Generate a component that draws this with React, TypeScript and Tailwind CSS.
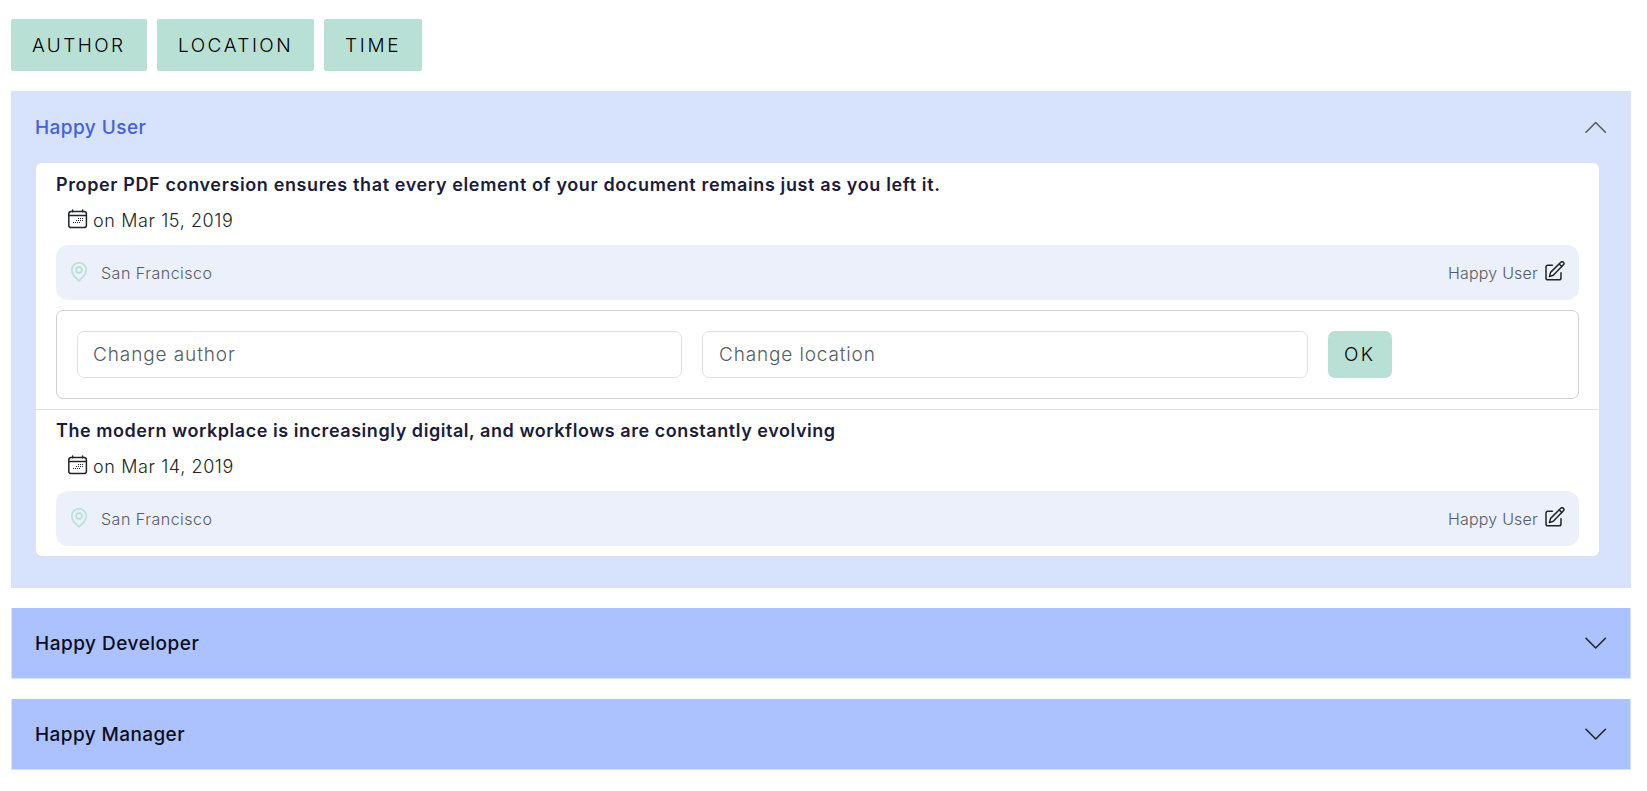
const filters = [
  { label: "AUTHOR", box: "w-[136px]", text: "tracking-[2.4px]" },
  { label: "LOCATION", box: "w-[157px]", text: "tracking-[2.5px]" },
  { label: "TIME", box: "w-[98px]", text: "tracking-[2.7px]" },
];

function Chevron({ up = false }: { up?: boolean }) {
  return (
    <svg width="22" height="22" viewBox="0 0 22 22" fill="none" stroke={up ? "#52605f" : "#212529"} strokeWidth="1.6" strokeLinecap="round" strokeLinejoin="round">
      <path d={up ? "M1 16.2 10.7 6.5l9.7 9.7" : "M1 6.3 10.7 16l9.7-9.7"} />
    </svg>
  );
}

const calendarDots = [
  [10, 9], [12, 9], [14, 9],
  [8, 11], [10, 11], [12, 11], [14, 11],
  [5, 13], [7, 13], [9, 13], [11, 13],
];

function CalendarIcon() {
  return (
    <svg width="20" height="20" viewBox="0 0 20 20" fill="none" stroke="#212529" strokeWidth="1.5" strokeLinecap="round">
      <rect x="0.8" y="2.6" width="17.6" height="16" rx="2.4" />
      <path d="M1 6.5h17.2M4.6 0.9v1.9M14.6 0.9v1.9" />
      {calendarDots.map(([x, y]) => (
        <rect key={`${x}-${y}`} x={x} y={y} width="1" height="1" fill="#212529" stroke="none" />
      ))}
    </svg>
  );
}

function PinIcon() {
  return (
    <svg width="16" height="20" viewBox="0 0 16 20" fill="none" stroke="#b8e0d4" strokeWidth="1.6">
      <path d="M8 18.9C5.6 16.9.8 12.3.8 8a7.2 7.2 0 0 1 14.4 0c0 4.3-4.8 8.9-7.2 10.9Z" />
      <circle cx="8" cy="8" r="2.9" />
    </svg>
  );
}

function EditIcon() {
  return (
    <svg width="20" height="20" viewBox="0 0 20 20" fill="none" stroke="#212529" strokeWidth="1.5" strokeLinecap="round" strokeLinejoin="round">
      <path d="M7.4 4.2H2.9A1.9 1.9 0 0 0 1 6.1v10.8a1.9 1.9 0 0 0 1.9 1.9h11.2a1.9 1.9 0 0 0 1.9-1.9v-5.2" />
      <path d="m4.4 15.6 1.2-4.2L15.8 1.3a1.75 1.75 0 0 1 2.6 2.5L8.3 14.2Z" />
      <path d="m14.2 3 2.6 2.5" />
    </svg>
  );
}

function Item({ title, titleClass, date }: { title: string; titleClass: string; date: string }) {
  return (
    <>
      <h3 className={`h-[30px] whitespace-nowrap text-[18px] leading-[30px] font-semibold text-[#1b1b3a] ${titleClass}`}>{title}</h3>
      <div className="mt-[5px] flex h-[30px] items-center pl-[12px] text-[18px] font-light text-[#212529]">
        <span className="mb-[2px]"><CalendarIcon /></span>
        <span className="ml-[5px] whitespace-nowrap tracking-[0.6px]">on {date}</span>
      </div>
      <div className="mt-[10px] flex h-[55px] items-center rounded-[12px] bg-[#ebf0fa] pr-[14px] pl-[15px] text-[16px] font-light text-[#555c63]">
        <span className="mb-[2px]"><PinIcon /></span>
        <span className="mt-[1px] ml-[14px] tracking-[0.5px]">San Francisco</span>
        <span className="mt-[1px] ml-auto tracking-[0.2px]">Happy User</span>
        <span className="mb-[3px] ml-[7px]"><EditIcon /></span>
      </div>
    </>
  );
}

function Collapsed({ label, textClass }: { label: string; textClass: string }) {
  return (
    <button className="flex h-[71px] w-full items-center justify-between border border-t-0 border-[#d7e2fd] bg-[#abc2ff] pr-[23px] pl-[23px] text-left text-[19px] font-medium text-[#0d0d1c]">
      <span className={`mt-[3px] ${textClass}`}>{label}</span>
      <Chevron />
    </button>
  );
}

export default function App() {
  return (
    <main className="h-[791px] bg-white pt-[19px] pr-[16px] pl-[11px] font-['Inter',sans-serif]">
      <div className="flex gap-[10px]">
        {filters.map((f) => (
          <button key={f.label} className={`h-[52px] rounded-[2px] bg-[#b8e0d4] pt-[2px] pl-[21px] text-left text-[19px] font-light text-black ${f.box} ${f.text}`}>
            {f.label}
          </button>
        ))}
      </div>

      <section className="mt-[20px] h-[497px] bg-[#d7e2fd] pr-[24px] pl-[24px]">
        <div className="flex h-[71px] items-center justify-between text-[19px] font-medium text-[#4361d8]">
          <span className="mt-[3px] tracking-[0.45px]">Happy User</span>
          <Chevron up />
        </div>
        <div className="mr-[7px] h-[395px] rounded-[7px] border border-[#dee2e6] bg-white">
          <div className="h-[247px] border-b border-[#dee0e2] px-[20px] pt-[7px]">
            <Item title="Proper PDF conversion ensures that every element of your document remains just as you left it." titleClass="tracking-[0.625px]" date="Mar 15, 2019" />
            <div className="mt-[10px] flex h-[89px] gap-[20px] rounded-[7px] border border-[#cdcfd1] p-[20px]">
              <input className="h-[47px] w-[605px] rounded-[7px] border border-[#dee2e6] px-[15px] text-[19px] font-light tracking-[0.9px] placeholder:text-[#555c63]" placeholder="Change author" />
              <input className="h-[47px] w-[606px] rounded-[7px] border border-[#dee2e6] px-[16px] text-[19px] font-light tracking-[0.85px] placeholder:text-[#555c63]" placeholder="Change location" />
              <button className="h-[47px] w-[64px] rounded-[7px] bg-[#b8e0d4] pt-[2px] pl-[16px] text-left text-[19px] font-light tracking-[2.4px] text-black">OK</button>
            </div>
          </div>
          <div className="px-[20px] pt-[6px]">
            <Item title="The modern workplace is increasingly digital, and workflows are constantly evolving" titleClass="tracking-[0.55px]" date="Mar 14, 2019" />
          </div>
        </div>
      </section>

      <div className="mt-[20px] flex flex-col gap-[20px]">
        <Collapsed label="Happy Developer" textClass="tracking-[0.5px]" />
        <Collapsed label="Happy Manager" textClass="tracking-[0.4px]" />
      </div>
    </main>
  );
}
